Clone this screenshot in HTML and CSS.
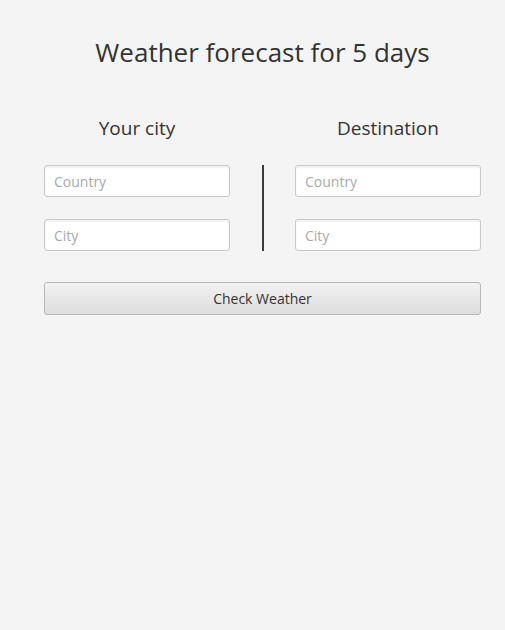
FILE: index.html
```html
<!DOCTYPE html>
<html lang="en">
<head>
    <meta charset="utf-8">
    <title>Weather forecast</title>
    <link rel="stylesheet" href="styles.css">
</head>
<body>
    <div class="app">
        <h1 class="title">Weather forecast for 5 days</h1>

        <div class="places">
            <div class="place">
                <h2 class="place-title">Your city</h2>
                <input type="text" class="field" placeholder="Country">
                <input type="text" class="field" placeholder="City">
            </div>

            <div class="divider"><span class="divider-line"></span></div>

            <div class="place">
                <h2 class="place-title">Destination</h2>
                <input type="text" class="field" placeholder="Country">
                <input type="text" class="field" placeholder="City">
            </div>
        </div>

        <button type="button" class="check-btn">Check Weather</button>
    </div>
</body>
</html>
```

FILE: styles.css
```css
html, body {
    margin: 0;
    height: 100%;
    background: #f4f4f4;
}

body {
    font-family: "Open Sans", "Noto Sans", sans-serif;
    color: #333;
}

.app {
    width: 437px;
    padding: 34px 0 0 44px;
}

.title {
    margin: 0 0 45px;
    font-size: 26px;
    font-weight: normal;
    text-align: center;
    line-height: 36px;
}

.places {
    display: grid;
    grid-template-columns: 186px 1fr 186px;
}

.place {
    display: flex;
    flex-direction: column;
}

.place-title {
    margin: 0 0 24px;
    font-size: 19px;
    font-weight: normal;
    text-align: center;
    line-height: 26px;
}

.field {
    box-sizing: border-box;
    height: 32px;
    margin-bottom: 22px;
    padding: 0 9px;
    border: 1px solid #c8c8c8;
    border-radius: 3px;
    background: #fff;
    box-shadow: inset 0 2px 2px rgba(0,0,0,0.06);
    font-family: inherit;
    font-size: 14px;
    color: #333;
}

.field::placeholder {
    color: #aaa;
}

.divider {
    display: flex;
    justify-content: center;
    padding-top: 50px;
}

.divider-line {
    width: 2px;
    height: 86px;
    background: #3a3a3a;
}

.check-btn {
    display: block;
    box-sizing: border-box;
    width: 100%;
    height: 33px;
    margin-top: 9px;
    border: 1px solid #b8b8b8;
    border-radius: 3px;
    background: linear-gradient(#f2f2f2, #dddddd);
    font-family: inherit;
    font-size: 14px;
    color: #333;
}
```
